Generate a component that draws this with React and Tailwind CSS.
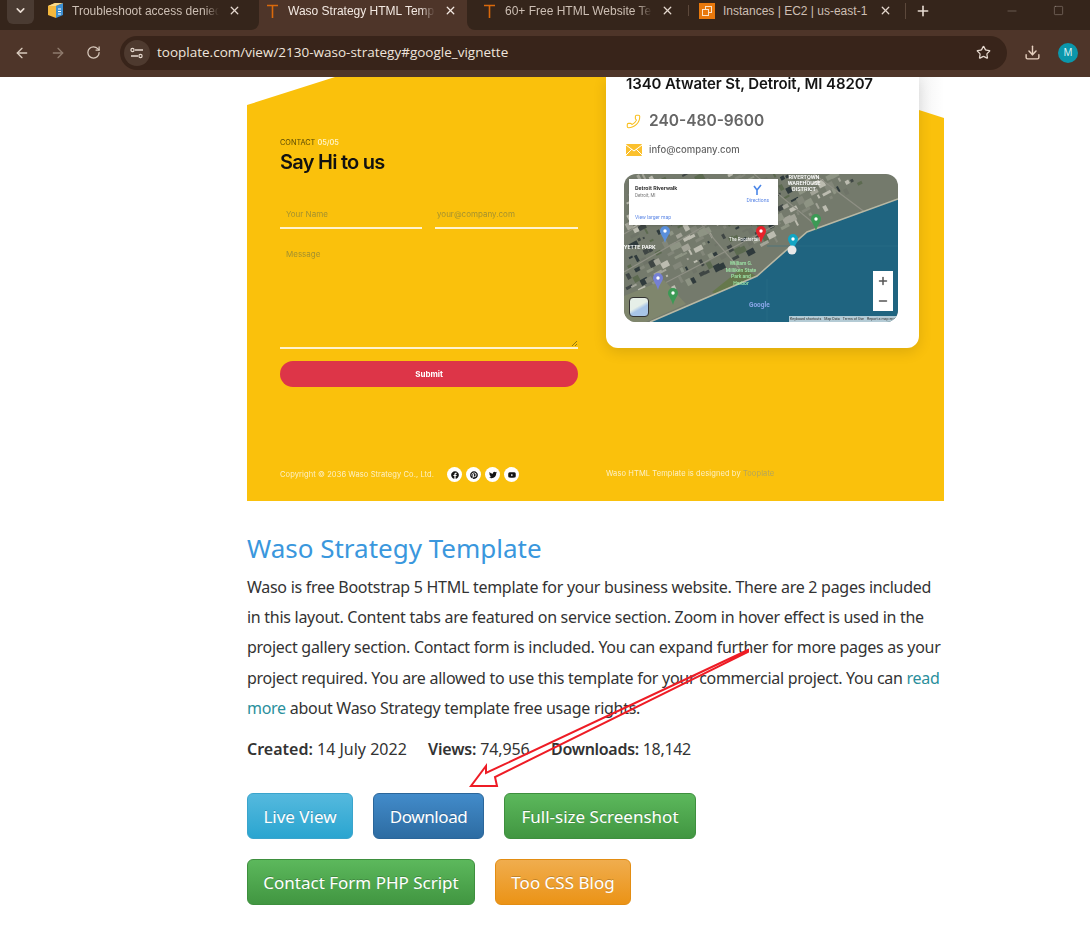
import React from "react";
import { ArrowLeft, ArrowRight, RotateCw, Star, Download, ChevronDown, X, Plus, Minus, Square, Plus as ZoomPlus, Phone } from "lucide-react";
import { FaFacebook, FaPinterest, FaTwitter, FaYoutube } from "react-icons/fa";

const TIcon = () => (
  <svg width="16" height="16" viewBox="0 0 16 16" className="shrink-0">
    <path d="M3 2.5H14M8.5 2.5V15" stroke="#d9690c" strokeWidth="1.6" fill="none" />
  </svg>
);
const BoxIcon = () => (
  <svg width="17" height="17" viewBox="0 0 17 17" className="shrink-0">
    <path d="M1 4l7-3 1 3v12L1 13z" fill="#f5b83d" />
    <path d="M9 4l7-3v12l-7 3z" fill="#3d8fd1" />
    <path d="M1 4l7-3 8 0-7 3z" fill="#f9d98a" />
    <path d="M11 7h3M11 9.5h3M11 12h3" stroke="#fff" strokeWidth="1" />
  </svg>
);
const Ec2Icon = () => (
  <svg width="16" height="16" viewBox="0 0 16 16" className="shrink-0">
    <rect width="16" height="16" fill="#e8780c" />
    <rect x="6.5" y="3.5" width="6" height="6" fill="none" stroke="#fbe3c8" strokeWidth="1" />
    <rect x="3.5" y="6.5" width="6" height="6" fill="#e8780c" stroke="#fbe3c8" strokeWidth="1" />
  </svg>
);

function Tab({ icon, title, className, textClass, closeClass, fade = true }) {
  return (
    <div className={`flex h-full shrink-0 items-center gap-2 pb-[9px] ${className}`}>
      {icon}
      <span className={`w-[147px] shrink-0 overflow-hidden whitespace-nowrap text-[12px] [font-family:'Liberation_Sans',sans-serif] ${fade ? "[mask-image:linear-gradient(to_right,black_90%,transparent)]" : ""} ${textClass}`}>{title}</span>
      <X size={13} strokeWidth={2.4} className={`ml-[1px] shrink-0 ${closeClass}`} />
    </div>
  );
}

function Chrome() {
  return (
    <div className="[font-family:'Open_Sans',sans-serif]">
      <div className="flex h-[30px] overflow-hidden bg-[#4e3529]">
        <div className="flex h-full w-[37px] shrink-0 items-start justify-center bg-[#35251b] pl-1">
          <div className="flex h-[24px] w-[27px] items-center justify-center rounded-b-md bg-[#4a3b32] pb-[3px]">
            <ChevronDown size={13} strokeWidth={3} className="text-[#e8dcd2]" />
          </div>
        </div>
        <Tab icon={<BoxIcon />} title="Troubleshoot access denied" className="w-[222px] rounded-br-lg bg-[#35251b] pl-[10px]" textClass="text-[#cdbfb4]" closeClass="text-[#e4d8ce]" />
        <Tab icon={<TIcon />} title="Waso Strategy HTML Template" className="w-[208px] pl-[5px]" textClass="text-[#f3e9e2]" closeClass="text-[#f3e9e2]" />
        <Tab icon={<TIcon />} title="60+ Free HTML Website Templates" className="w-[221px] rounded-bl-lg bg-[#35251b] pl-[14px]" textClass="text-[#cdbfb4]" closeClass="text-[#e4d8ce]" />
        <div className="h-full w-px shrink-0 bg-[#35251b] py-[5px] pb-[14px]"><div className="h-full w-px bg-[#5c483b]" /></div>
        <Tab icon={<Ec2Icon />} title="Instances | EC2 | us-east-1" fade={false} className="w-[216px] bg-[#35251b] pl-[10px]" textClass="text-[#cdbfb4]" closeClass="text-[#e4d8ce]" />
        <div className="flex h-full min-w-0 flex-1 items-center bg-[#35251b] pb-[9px]">
          <div className="h-4 w-px bg-[#5c483b]" />
          <Plus size={16} strokeWidth={2.4} className="ml-[9px] text-[#e8dcd2]" />
          <Minus size={14} strokeWidth={1} className="ml-[74px] text-[#8f8076]" />
          <Square size={11} strokeWidth={1} className="ml-[34px] text-[#a89a90]" />
        </div>
      </div>
      <div className="flex h-[47px] items-center bg-[#4e3529] pb-[2px]">
        <ArrowLeft size={16} strokeWidth={2} className="ml-[14px] text-[#d9cabd]" />
        <ArrowRight size={16} strokeWidth={2} className="ml-[20px] text-[#8f7b6d]" />
        <RotateCw size={15} strokeWidth={2} className="ml-[20px] text-[#d9cabd]" />
        <div className="ml-[19px] flex h-[34px] w-[887px] items-center rounded-full bg-[#38241a] pl-[4px] pr-[16px]">
          <div className="flex h-[26px] w-[26px] items-center justify-center rounded-full bg-[#4e3a2f]">
            <svg width="14" height="12" viewBox="0 0 14 12">
              <path d="M5 3h8M1 9h7" stroke="#e6d9cf" strokeWidth="1.3" />
              <circle cx="2.5" cy="3" r="1.6" fill="none" stroke="#e6d9cf" strokeWidth="1.2" />
              <circle cx="10.5" cy="9" r="1.6" fill="none" stroke="#e6d9cf" strokeWidth="1.2" />
            </svg>
          </div>
          <span className="ml-[7px] flex-1 text-[13.5px] text-[#efe4dc]">tooplate.com/view/2130-waso-strategy#google_vignette</span>
          <Star size={15} strokeWidth={2} className="text-[#e6d9cf]" />
        </div>
        <Download size={17} strokeWidth={2} className="ml-[17px] text-[#e6d0bf]" />
        <div className="ml-[17px] flex h-5 w-5 items-center justify-center rounded-full bg-[#0b97ab] text-[10px] text-[#e3f6f8]">M</div>
      </div>
    </div>
  );
}

const palette = ["#6f7468", "#a3a498", "#3f4644", "#bcbcb0", "#5c6a50", "#83877a", "#2f3a3c", "#8e9484"];
const buildings = Array.from({ length: 520 }, (_, i) => {
  const x = (i * 137.3) % 280;
  const y = (i * 61.7) % 135;
  return { x, y, w: 2 + (i * 7) % 8, h: 2 + (i * 5) % 6, c: palette[(i * 3 + (i % 7)) % 8] };
}).filter((b) => b.y < 144 - b.x * 0.45 - (b.x > 130 ? (b.x - 130) * 0.2 : 0) - 8);

function MapPin({ x, y, fill }) {
  return (
    <g transform={`translate(${x} ${y})`}>
      <path d="M0 9C-2 2-5 0-5-3a5 5 0 0 1 10 0C5 0 2 2 0 9z" fill={fill} />
      <circle cx="0" cy="-3" r="1.7" fill="#fff" />
    </g>
  );
}

function MapBox() {
  return (
    <div className="relative -ml-[2px] mt-[16px] h-[148px] w-[274px] overflow-hidden rounded-xl [font-family:'Roboto',sans-serif]">
      <svg width="274" height="148" viewBox="0 0 274 148" className="block">
        <rect width="274" height="148" fill="#747a6c" />
        {buildings.map((b, i) => (
          <rect key={i} x={b.x} y={b.y} width={b.w} height={b.h} fill={b.c} transform={`rotate(-28 ${b.x} ${b.y})`} />
        ))}
        <path d="M0 98L110 35M20 120L150 52M60 30L120 100M130 0L205 62M190 0L250 45M0 60L70 20" stroke="#8f9085" strokeWidth="1.2" fill="none" />
        <path d="M88 118L118 94L136 104L108 128z" fill="#66784c" />
        <path d="M0 122L40 106L62 130L22 148H0z" fill="#7f866d" />
        <path d="M26 148L133 102L183 58L274 25V148z" fill="#1f6480" />
        <path d="M26 148L133 102L183 58L274 25" stroke="#b8b8a4" strokeWidth="1.6" fill="none" />
        <path d="M143 72H274M143 105V148" stroke="#2d7389" strokeWidth="0.5" />
        <MapPin x={137} y={60} fill="#e8222a" />
        <MapPin x={169} y={68} fill="#12a5c4" />
        <MapPin x={192} y={48} fill="#3c9a55" />
        <MapPin x={41} y={60} fill="#5a8fdc" />
        <MapPin x={34} y={107} fill="#7580d4" />
        <MapPin x={49} y={122} fill="#3c9a55" />
        <circle cx="168" cy="76" r="4.5" fill="#e8e8e8" />
      </svg>
      <div className="absolute left-[156px] top-0 w-[48px] text-center text-[5.5px] font-semibold leading-[6px] text-white">RIVERTOWN WAREHOUSE DISTRICT</div>
      <div className="absolute left-0 top-[69px] text-[5.5px] font-semibold text-white">YETTE PARK</div>
      <div className="absolute left-[99px] top-[86px] w-[36px] text-center text-[5px] font-medium leading-[6.5px] text-[#9fe8a8]">William G. Milliken State Park and Harbor</div>
      <div className="absolute left-[105px] top-[63px] text-[4.5px] text-white">The Roostertail</div>
      <div className="absolute bottom-[11px] left-[125px] text-[6.5px] font-bold text-[#8aa6e8]">Google</div>
      <div className="absolute bottom-0 right-0 flex gap-[3px] whitespace-nowrap bg-[#ffffffaa] px-[1px] text-[3.6px] leading-[6px] text-[#333]">
        <span>Keyboard shortcuts</span><span>Map Data</span><span>Terms of Use</span><span>Report a map error</span>
      </div>
      <div className="absolute left-[5px] top-[5px] flex h-[46px] w-[149px] justify-between bg-white py-[5px] pl-[6px] pr-[9px] shadow-sm">
        <div className="flex flex-col">
          <span className="text-[5.5px] font-bold leading-[9px] text-[#333]">Detroit Riverwalk</span>
          <span className="text-[4.5px] leading-[6px] text-[#777]">Detroit, MI</span>
          <span className="mt-auto text-[5px] leading-[6px] text-[#5a86e6]">View larger map</span>
        </div>
        <div className="flex h-[20px] flex-col items-center">
          <svg width="9" height="11" viewBox="0 0 9 11"><path d="M4 11V6L1 2M4 6L8 1" stroke="#4a86e8" strokeWidth="1.6" fill="none" /></svg>
          <span className="mt-[2px] text-[5px] leading-[6px] text-[#5a86e6]">Directions</span>
        </div>
      </div>
      <div className="absolute bottom-[11px] right-[5px] flex h-[40px] w-[20px] flex-col items-center justify-around bg-white text-[#555]">
        <ZoomPlus size={12} strokeWidth={3} />
        <Minus size={12} strokeWidth={3} />
      </div>
      <div className="absolute bottom-[5px] left-[5px] h-[20px] w-[20px] rounded-sm border border-[#333] bg-[linear-gradient(150deg,#e6efe8_45%,#a8c5e8_60%)]" />
    </div>
  );
}

function Social({ Icon }) {
  return (
    <span className="flex h-[15px] w-[15px] items-center justify-center rounded-full bg-white text-[#151515]">
      <Icon size={8} />
    </span>
  );
}

function Hero() {
  return (
    <div className="relative flex h-[424px] flex-col overflow-hidden bg-[linear-gradient(90deg,#fff_50%,#f2f2f2_96%,#fff_100%)] [font-family:'Inter',sans-serif]">
      <div className="absolute inset-0 bg-[#fac10c] [clip-path:polygon(0_28px,88px_0,500px_0,672px_33px,697px_41px,697px_424px,0_424px)]" />
      <div className="relative flex flex-1 pl-[33px] blur-[0.3px]">
        <div className="w-[298px] pt-[60px]">
          <div className="text-[7.3px] leading-[11px] text-[#5a4a05]">CONTACT <span className="font-semibold text-[#fff3c4]">05/05</span></div>
          <h3 className="mt-[1px] text-[20px] font-semibold leading-[26px] tracking-[-0.75px] text-[#111]">Say Hi to us</h3>
          <div className="mt-[26px] flex gap-[13px] text-[8px] text-[#a3912f]">
            <div className="h-[28px] w-[142px] border-b-2 border-[#fff3cf] pl-[6px] pt-[7px]">Your Name</div>
            <div className="h-[28px] w-[143px] border-b-2 border-[#fff3cf] pl-[2px] pt-[7px]">your@company.com</div>
          </div>
          <div className="relative mt-[14px] h-[106px] border-b-2 border-[#fff3cf] pl-[6px] pt-[5px] text-[8px] text-[#a3912f]">
            Message
            <svg width="5" height="5" viewBox="0 0 5 5" className="absolute bottom-[1px] right-[1px]"><path d="M0 5L5 0M3 5L5 3" stroke="#6b5a12" strokeWidth="0.7" /></svg>
          </div>
          <div className="mt-[12px] flex h-[26px] items-center justify-center rounded-full bg-[#dd3548] text-[8px] font-bold text-white">Submit</div>
        </div>
        <div className="ml-[28px] h-[271px] w-[313px] rounded-b-xl bg-white pl-[20px] pr-[18px] shadow-[0_4px_14px_rgba(0,0,0,0.12)]">
          <div className="text-[15px] font-semibold leading-[14px] tracking-[-0.1px] text-[#151515]">1340 Atwater St, Detroit, MI 48207</div>
          <div className="mt-[20px] flex items-center gap-[8px]">
            <Phone size={15} strokeWidth={1.7} className="shrink-0 scale-x-[-1] text-[#f9bf1e]" />
            <span className="text-[15.5px] font-semibold leading-[20px] text-[#666]">240-480-9600</span>
          </div>
          <div className="mt-[11px] flex items-center gap-[7px]">
            <svg width="16" height="12" viewBox="0 0 16 12" className="shrink-0">
              <rect width="16" height="12" rx="1" fill="#fbc02d" />
              <path d="M0 1L8 7L16 1M0 11L6 5M16 11L10 5" stroke="#fff" strokeWidth="1" fill="none" />
            </svg>
            <span className="text-[9.5px] font-medium leading-[16px] text-[#666]">info@company.com</span>
          </div>
          <MapBox />
        </div>
      </div>
      <div className="relative flex h-[53px] items-start pl-[33px] text-[7.5px] tracking-[0.1px] text-[#fdf1c8] blur-[0.3px]">
        <div className="flex w-[326px] items-center pt-[19px]">
          <span className="w-[167px]">Copyright © 2036 Waso Strategy Co., Ltd.</span>
          <div className="flex gap-[4px]">
            <Social Icon={FaFacebook} /><Social Icon={FaPinterest} /><Social Icon={FaTwitter} /><Social Icon={FaYoutube} />
          </div>
        </div>
        <div className="pt-[20px]">Waso HTML Template is designed by <span className="text-[#b3a55a]">Tooplate</span></div>
      </div>
    </div>
  );
}

function Btn({ children, className }) {
  return (
    <a className={`flex h-[46px] items-center justify-center rounded-md border pt-px text-[17px] text-white [text-shadow:0_-1px_0_rgba(0,0,0,0.2)] ${className}`}>{children}</a>
  );
}

function Arrow() {
  return (
    <svg width="300" height="150" viewBox="0 0 300 150" className="pointer-events-none absolute left-[460px] top-[645px]">
      <path d="M288 5L26 128L26 121L11 141L37 141L35 132L288 7z" fill="none" stroke="#ee1c25" strokeWidth="2" strokeLinejoin="miter" />
    </svg>
  );
}

export default function App() {
  return (
    <div className="relative min-h-[932px] overflow-hidden bg-white [font-family:'Noto_Sans',sans-serif]">
      <Chrome />
      <main className="ml-[247px] w-[697px]">
        <Hero />
        <h2 className="mt-[26px] text-[26px] leading-[42px] text-[#3a97dd]">Waso Strategy Template</h2>
        <p className="mt-[3px] text-[16px] leading-[30.2px] tracking-[-0.28px] text-[#333]">
          Waso is free Bootstrap 5 HTML template for your business website. There are 2 pages included in this layout. Content tabs are featured on service section. Zoom in hover effect is used in the project gallery section. Contact form is included. You can expand further for more pages as your project required. You are allowed to use this template for your commercial project. You can <span className="text-[#2a8f9c]">read more</span> about Waso Strategy template free usage rights.
        </p>
        <div className="mt-[11px] flex text-[16px] leading-[30px] text-[#333]">
          <span className="w-[181px]"><b className="font-semibold">Created:</b> 14 July 2022</span>
          <span className="w-[123px] tracking-[-0.15px]"><b className="font-semibold">Views:</b> 74,956</span>
          <span className="tracking-[-0.3px]"><b className="font-semibold">Downloads:</b> 18,142</span>
        </div>
        <div className="mt-[29px] flex gap-[20px]">
          <Btn className="w-[106px] border-[#3aa4cc] bg-[linear-gradient(#55b9de,#2aa5d0)]">Live View</Btn>
          <Btn className="w-[111px] border-[#2b669a] bg-[linear-gradient(#428bca,#2d6ca2)] tracking-[-0.4px]">Download</Btn>
          <Btn className="w-[192px] border-[#3e8f3e] bg-[linear-gradient(#5cb85c,#419641)]">Full-size Screenshot</Btn>
        </div>
        <div className="mt-[20px] flex gap-[20px]">
          <Btn className="w-[228px] border-[#3e8f3e] bg-[linear-gradient(#5cb85c,#419641)]">Contact Form PHP Script</Btn>
          <Btn className="w-[136px] border-[#e38d13] bg-[linear-gradient(#f0ad4e,#eb9316)]">Too CSS Blog</Btn>
        </div>
      </main>
      <Arrow />
    </div>
  );
}
